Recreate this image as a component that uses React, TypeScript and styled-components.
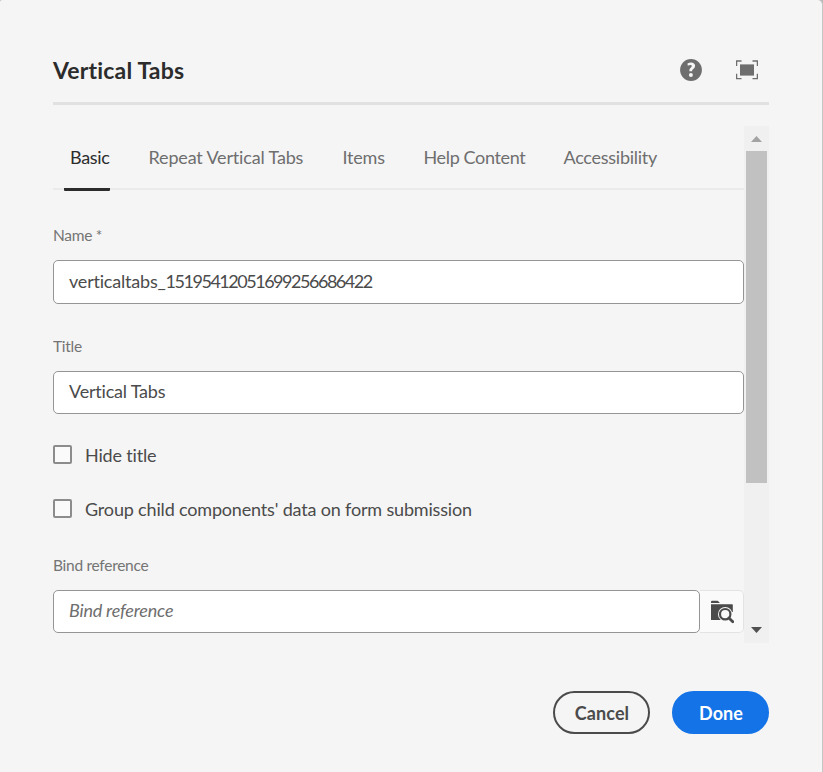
import React from "react";
import styled, { createGlobalStyle } from "styled-components";

const GlobalStyle = createGlobalStyle`
  * { box-sizing: border-box; }
  html, body { margin: 0; padding: 0; }
  body {
    background: #b9b9b9;
    font-family: "Lato", "Noto Sans", sans-serif;
    font-size: 18px;
    font-variant-ligatures: none;
    letter-spacing: -0.2px;
    color: #4b4b4b;
    overflow: hidden;
  }
  button { font-family: inherit; padding: 0; cursor: pointer; }
`;

const Dialog = styled.main`
  display: flex;
  flex-direction: column;
  width: 823px;
  height: 772px;
  padding: 37px 53px 0;
  background: #f5f5f5;
  border-right: 1px solid #c6c6c6;
  border-radius: 2px 5px 0 0;
`;

const Header = styled.header`
  display: flex;
  align-items: center;
  justify-content: space-between;
  height: 68px;
  border-bottom: 3px solid #e1e1e1;
`;

const Heading = styled.h1`
  margin: 1px 0 0;
  font-size: 23px;
  font-weight: 700;
  line-height: 30px;
  letter-spacing: 0.18px;
  color: #2c2c2c;
`;

const HeaderActions = styled.div`
  display: flex;
  align-items: center;
  gap: 34px;
  padding-right: 11px;
`;

const IconButton = styled.button`
  display: flex;
  width: 22px;
  height: 22px;
  border: 0;
  background: none;
`;

const ScrollArea = styled.div`
  display: flex;
  height: 517px;
  margin-top: 21px;
`;

const Form = styled.div`
  width: 691px;
  overflow: hidden;
`;

const Tabs = styled.nav`
  display: flex;
  height: 65px;
  padding-left: 11px;
  background: linear-gradient(#eaeaea, #eaeaea) 0 62px / 100% 2px no-repeat;
`;

const Tab = styled.button<{ $active?: boolean; $width: number; $spacing: number }>`
  width: ${(p) => p.$width}px;
  margin-right: 32.5px;
  padding: 0 0 0 6px;
  border: 0;
  border-bottom: 3px solid ${(p) => (p.$active ? "#2c2c2c" : "transparent")};
  border-radius: 1px;
  background: none;
  font-size: 18px;
  line-height: 62px;
  letter-spacing: ${(p) => p.$spacing}px;
  text-align: left;
  white-space: nowrap;
  color: ${(p) => (p.$active ? "#2c2c2c" : "#6e6e6e")};
`;

const Label = styled.label<{ $top: number }>`
  display: block;
  height: 20px;
  margin: ${(p) => p.$top}px 0 15px;
  font-size: 15.5px;
  line-height: 20px;
  letter-spacing: -0.28px;
  color: #747474;
`;

const Field = styled.div<{ $height?: number; $placeholder?: boolean }>`
  flex: 1;
  height: ${(p) => p.$height ?? 43}px;
  padding-left: 15px;
  border: 1px solid #959595;
  border-radius: 5px;
  background: #fff;
  line-height: ${(p) => (p.$height ? 41 : 39)}px;
  font-style: ${(p) => (p.$placeholder ? "italic" : "normal")};
  color: ${(p) => (p.$placeholder ? "#6e6e6e" : "#4b4b4b")};
`;

const Digits = styled.span`
  letter-spacing: -1.48px;
`;

const CheckRow = styled.label<{ $top: number }>`
  display: flex;
  align-items: flex-start;
  gap: 13px;
  height: 20px;
  margin-top: ${(p) => p.$top}px;
  line-height: 20px;
  letter-spacing: -0.17px;
`;

const CheckText = styled.span``;

const Box = styled.span`
  width: 19px;
  height: 19px;
  border: 2px solid #8c8c8c;
  border-radius: 2px;
  background: #fafafa;
`;

const FieldGroup = styled.div`
  display: flex;
`;

const PickerButton = styled.button`
  display: flex;
  align-items: center;
  justify-content: center;
  width: 44px;
  height: 43px;
  border: 1px solid #e3e3e3;
  border-left: 0;
  border-radius: 0 5px 5px 0;
  background: #fafafa;
`;

const Scrollbar = styled.div`
  display: flex;
  flex-direction: column;
  align-items: center;
  width: 25px;
  background: #f0f0f0;
`;

const Arrow = styled.svg`
  width: 25px;
  height: 25px;
`;

const Rail = styled.div`
  flex: 1;
`;

const Thumb = styled.div`
  width: 21px;
  height: 332px;
  background: #c1c1c1;
`;

const Footer = styled.footer`
  display: flex;
  justify-content: flex-end;
  gap: 22px;
  margin-top: 48px;
`;

const ActionButton = styled.button<{ $primary?: boolean }>`
  width: 97px;
  height: 43px;
  padding: 1px 0 0 1px;
  border: 2px solid ${(p) => (p.$primary ? "#1473e6" : "#4b4b4b")};
  border-radius: 22px;
  background: ${(p) => (p.$primary ? "#1473e6" : "transparent")};
  color: ${(p) => (p.$primary ? "#fff" : "#4b4b4b")};
  font-size: 18px;
  font-weight: 700;
  line-height: 38px;
  letter-spacing: 0.1px;
`;

const HelpIcon = () => (
  <svg width="22" height="22" viewBox="0 0 22 22">
    <circle cx="11" cy="11" r="10.9" fill="#6e6e6e" />
    <path
      d="M7.5 4.5C8.6 3.8 9.8 3.5 11.1 3.5c2.4 0 4 1.3 4 3.3 0 1.6-.9 2.5-1.9 3.3-.8.7-1.1 1.1-1 2.2H9.4c-.2-1.6.2-2.6 1.3-3.6.8-.7 1-1.1 1-1.7 0-.7-.5-1-1.3-1-.9 0-1.8.3-2.6.8z"
      fill="#f5f5f5"
    />
    <circle cx="10.9" cy="16.1" r="2" fill="#f5f5f5" />
  </svg>
);

const FullscreenIcon = () => (
  <svg width="22" height="22" viewBox="0 0 22 22">
    <path
      d="M.6 7V2h4.9M16.5 2h4.9V7M21.4 14.8v4.9h-4.9M5.5 19.7H.6V14.8"
      fill="none"
      stroke="#6e6e6e"
      strokeWidth="1.3"
    />
    <rect x="4" y="5.4" width="14" height="11.2" fill="#6e6e6e" />
  </svg>
);

const FolderSearchIcon = () => (
  <svg width="24" height="24" viewBox="0 0 24 24">
    <path d="M1 2Q1 .8 2 .8h5.4q.7 0 1.1.6L9.9 3.1H1z" fill="#4b4b4b" />
    <path d="M1 4.2h21.2q.6 0 .6.6V20H1z" fill="#4b4b4b" />
    <circle cx="15.2" cy="14.2" r="7.2" fill="#fafafa" />
    <path d="M18 20h5v-8h-1z" fill="#fafafa" />
    <circle cx="15.2" cy="14.2" r="5.2" fill="none" stroke="#4b4b4b" strokeWidth="2.2" />
    <path d="M18.9 17.9l3.9 3.9" stroke="#4b4b4b" strokeWidth="2.8" strokeLinecap="round" />
  </svg>
);

const tabs = [
  { label: "Basic", width: 46, spacing: -0.35 },
  { label: "Repeat Vertical Tabs", width: 161.5, spacing: -0.16 },
  { label: "Items", width: 48.5, spacing: -0.2 },
  { label: "Help Content", width: 107.5, spacing: -0.36 },
  { label: "Accessibility", width: 100, spacing: -0.26 },
];

export default function App() {
  return (
    <>
      <GlobalStyle />
      <Dialog>
        <Header>
          <Heading>Vertical Tabs</Heading>
          <HeaderActions>
            <IconButton aria-label="Help">
              <HelpIcon />
            </IconButton>
            <IconButton aria-label="Fullscreen">
              <FullscreenIcon />
            </IconButton>
          </HeaderActions>
        </Header>

        <ScrollArea>
          <Form>
            <Tabs>
              {tabs.map((tab, i) => (
                <Tab key={tab.label} $active={i === 0} $width={tab.width} $spacing={tab.spacing}>
                  {tab.label}
                </Tab>
              ))}
            </Tabs>

            <Label $top={34}>Name *</Label>
            <Field $height={44}>
              verticaltabs_<Digits>15195412051699256686422</Digits>
            </Field>

            <Label $top={32}>Title</Label>
            <Field>Vertical Tabs</Field>

            <CheckRow $top={31}>
              <Box />
              <CheckText>Hide title</CheckText>
            </CheckRow>
            <CheckRow $top={34}>
              <Box />
              <CheckText>Group child components' data on form submission</CheckText>
            </CheckRow>

            <Label $top={36}>Bind reference</Label>
            <FieldGroup>
              <Field $placeholder>Bind reference</Field>
              <PickerButton aria-label="Browse">
                <FolderSearchIcon />
              </PickerButton>
            </FieldGroup>
          </Form>

          <Scrollbar>
            <Arrow viewBox="0 0 25 25">
              <path d="M7 16h11l-5.5-6z" fill="#a3a3a3" />
            </Arrow>
            <Rail>
              <Thumb />
            </Rail>
            <Arrow viewBox="0 0 25 25">
              <path d="M7 9h11l-5.5 6z" fill="#505050" />
            </Arrow>
          </Scrollbar>
        </ScrollArea>

        <Footer>
          <ActionButton>Cancel</ActionButton>
          <ActionButton $primary>Done</ActionButton>
        </Footer>
      </Dialog>
    </>
  );
}
